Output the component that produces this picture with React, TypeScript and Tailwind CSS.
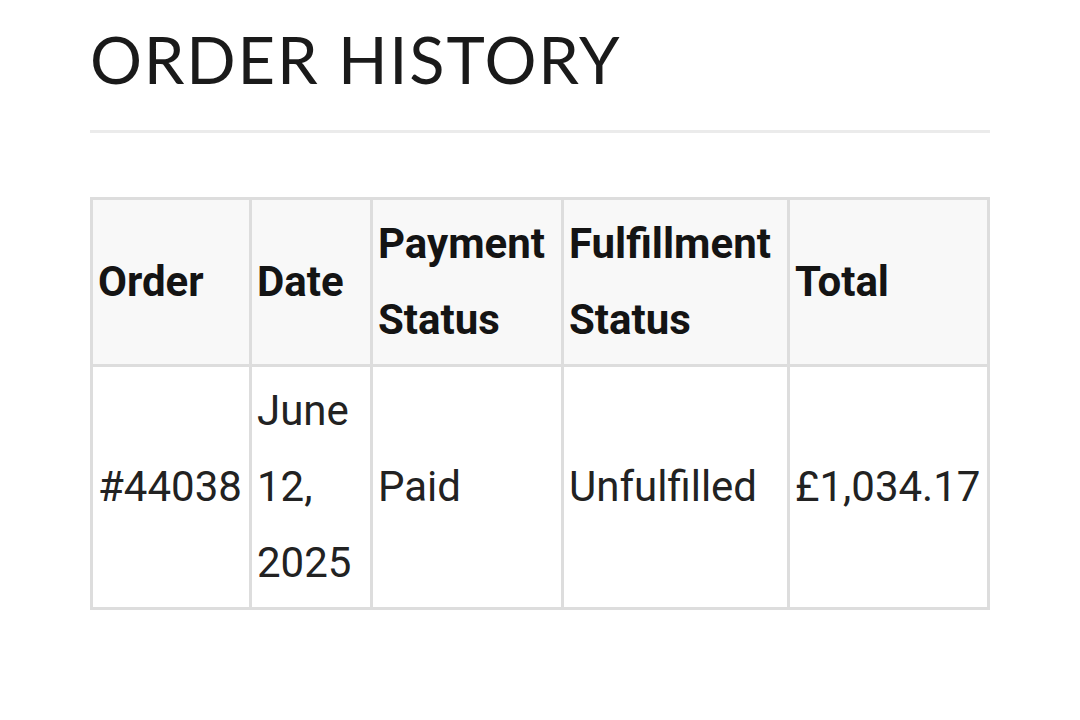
export default function App() {
  const rows = [
    { order: "#44038", date: "June 12, 2025", payment: "Paid", fulfillment: "Unfulfilled", total: "£1,034.17" },
  ];

  return (
    <div className="min-h-[720px] bg-white">
      <div className="mx-auto w-[900px]">
        <h1
          className="pt-[20px] text-[65px] leading-[78px] font-normal tracking-[1.8px] text-[#1a1a1a]"
          style={{ fontFamily: "Lato, 'Liberation Sans', sans-serif" }}
        >
          ORDER HISTORY
        </h1>
        <div className="mt-[32px] h-[3px] bg-[#ebebeb]" />

        <table
          className="mt-[64px] w-[899px] table-fixed border-collapse text-[42px] leading-[76px] text-[#222]"
          style={{ fontFamily: "Roboto, 'Liberation Sans', sans-serif" }}
        >
          <colgroup>
            <col className="w-[159px]" />
            <col className="w-[121px]" />
            <col className="w-[191px]" />
            <col className="w-[226px]" />
            <col className="w-[200px]" />
          </colgroup>
          <thead>
            <tr className="bg-[#f8f8f8]">
              {["Order", "Date", "Payment Status", "Fulfillment Status", "Total"].map((h) => (
                <th
                  key={h}
                  className="border-[3px] border-[#dddddd] px-[5px] py-[6px] text-left align-middle font-bold text-[#141414]"
                >
                  {h}
                </th>
              ))}
            </tr>
          </thead>
          <tbody>
            {rows.map((r) => (
              <tr key={r.order}>
                <td className="border-[3px] border-[#dddddd] px-[5px] py-[6px] align-middle">{r.order}</td>
                <td className="border-[3px] border-[#dddddd] px-[5px] py-[6px] align-middle">{r.date}</td>
                <td className="border-[3px] border-[#dddddd] px-[5px] py-[6px] align-middle">{r.payment}</td>
                <td className="border-[3px] border-[#dddddd] px-[5px] py-[6px] align-middle">{r.fulfillment}</td>
                <td className="border-[3px] border-[#dddddd] px-[5px] py-[6px] align-middle">{r.total}</td>
              </tr>
            ))}
          </tbody>
        </table>
      </div>
    </div>
  );
}
